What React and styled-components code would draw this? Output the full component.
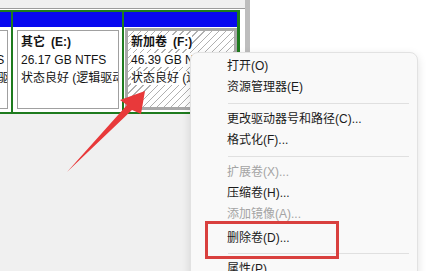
import React from 'react';
import styled, { createGlobalStyle } from 'styled-components';

const GlobalStyle = createGlobalStyle`
  html, body {
    margin: 0;
    padding: 0;
    background: #fff;
  }
  body {
    font-family: "Liberation Sans", "Noto Sans CJK SC", sans-serif;
  }
`;

const Page = styled.div`
  position: relative;
  width: 439px;
  height: 271px;
  overflow: hidden;
  display: flex;
`;

const LeftPane = styled.div`
  width: 245px;
  flex: none;
  display: flex;
  flex-direction: column;
  background: #f0f0f0;
`;

const TopStrip = styled.div`
  height: 8px;
  border-bottom: 1px solid #9c9c9c;
`;

const DiskRow = styled.div`
  background: #fff;
  padding-top: 1px;
`;

const DiskFrame = styled.div`
  display: flex;
  gap: 2px;
  height: 100px;
  padding: 2px 3px 2px 2px;
  margin-left: -91px;
  background: #1e7b1e;
  width: fit-content;
`;

const Partition = styled.div`
  width: ${(p) => p.$width}px;
  display: flex;
  flex-direction: column;
  background: #fff;
`;

const Header = styled.div`
  height: 15px;
  flex: none;
  background: #0808f0;
`;

const Volume = styled.div`
  flex: 1;
  overflow: hidden;
  white-space: nowrap;
  margin: ${(p) => (p.$selected ? '1px 0 2px 1px' : '3px 3px 3px 4px')};
  border: ${(p) => (p.$selected ? '3px solid #a8a8a8' : '1px solid #a0a0a0')};
  padding: 2px 3px;
  font-size: 12px;
  line-height: 18px;
  color: #141414;
  background: ${(p) =>
    p.$selected
      ? 'repeating-linear-gradient(-45deg, #fff 0 4px, #b0b0b0 4px 5px)'
      : '#fff'};
`;

const Line = styled.div`
  span {
    background: #fff;
    font-weight: ${(p) => (p.$bold ? 700 : 400)};
  }
`;

const Rest = styled.div`
  flex: 1;
`;

const RightPane = styled.div`
  flex: 1;
  border-left: 5px solid #bdbdbd;
  background: #fff;
`;

const Menu = styled.div`
  position: absolute;
  left: 190px;
  top: 52px;
  width: 228px;
  height: 240px;
  box-sizing: border-box;
  padding: 3px 0;
  background: #f9f9f9;
  border: 1px solid #e2e2e2;
  border-radius: 8px;
  box-shadow: 0 3px 10px rgba(0, 0, 0, 0.12);
  font-size: 12px;
`;

const MenuItem = styled.div`
  position: relative;
  height: ${(p) => (p.$marked ? '23px' : '21px')};
  padding-top: ${(p) => (p.$marked ? '3px' : '0')};
  box-sizing: border-box;
  line-height: ${(p) => (p.$marked ? '20px' : '21px')};
  padding-left: 36px;
  color: ${(p) => (p.$disabled ? '#a4a4a4' : '#1b1b1b')};

  ${(p) =>
    p.$marked &&
    `
    &::after {
      content: '';
      position: absolute;
      left: 14px;
      top: -4px;
      width: 134px;
      height: 38px;
      box-sizing: border-box;
      border: 3px solid #d9403e;
    }
  `}
`;

const Separator = styled.div`
  height: 1px;
  margin: 5px 8px 5px 37px;
  background: #e0e0e0;
`;

const Arrow = styled.svg`
  position: absolute;
  left: 0;
  top: 0;
  pointer-events: none;
`;

const partitions = [
  { width: 100, name: '新加卷\u2002(D:)', size: '58.59 GB NTFS', status: '状态良好 (逻辑驱动器)' },
  { width: 109, name: '其它\u2002(E:)', size: '26.17 GB NTFS', status: '状态良好 (逻辑驱动器)' },
  { width: 113, name: '新加卷\u2002(F:)', size: '46.39 GB NTFS', status: '状态良好 (逻辑驱动器)', selected: true },
];

const menu = [
  { label: '打开(O)' },
  { label: '资源管理器(E)' },
  { sep: true },
  { label: '更改驱动器号和路径(C)...' },
  { label: '格式化(F)...' },
  { sep: true },
  { label: '扩展卷(X)...', disabled: true },
  { label: '压缩卷(H)...' },
  { label: '添加镜像(A)...', disabled: true },
  { label: '删除卷(D)...', marked: true },
  { sep: true },
  { label: '属性(P)' },
];

export default function App() {
  return (
    <>
      <GlobalStyle />
      <Page>
        <LeftPane>
          <TopStrip />
          <DiskRow>
            <DiskFrame>
              {partitions.map((p) => (
                <Partition key={p.name} $width={p.width}>
                  <Header />
                  <Volume $selected={p.selected}>
                    <Line $bold><span>{p.name}</span></Line>
                    <Line><span>{p.size}</span></Line>
                    <Line><span>{p.status}</span></Line>
                  </Volume>
                </Partition>
              ))}
            </DiskFrame>
          </DiskRow>
          <Rest />
        </LeftPane>
        <RightPane />

        <Menu>
          {menu.map((m, i) =>
            m.sep ? (
              <Separator key={i} />
            ) : (
              <MenuItem key={i} $disabled={m.disabled} $marked={m.marked}>
                {m.label}
              </MenuItem>
            )
          )}
        </Menu>

        <Arrow width="439" height="271" viewBox="0 0 439 271">
          <polygon
            points="145,91 120,100 127,105 67,172 132,110 141,114"
            fill="#e8393a"
          />
        </Arrow>
      </Page>
    </>
  );
}
